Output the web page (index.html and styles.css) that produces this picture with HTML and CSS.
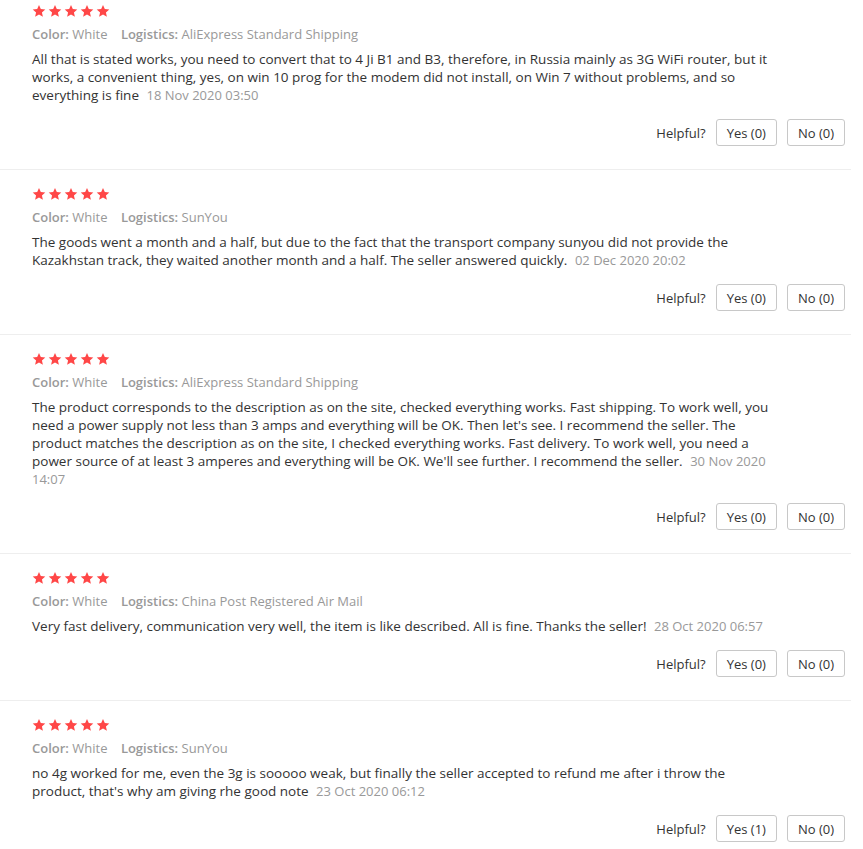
FILE: index.html
```html
<!DOCTYPE html>
<html lang="en">
  <head>
    <meta charset="UTF-8" />
    <meta name="viewport" content="width=device-width, initial-scale=1.0" />
    <title>Feedback</title>
    <link rel="stylesheet" href="styles.css">
  </head>
  <body>
    <div class="feedback-list">

      <div class="feedback-item">
        <div class="stars">
          <svg class="star" viewBox="0 0 24 24"><path d="M12 1.5l3.1 7.1 7.7.7-5.8 5.1 1.7 7.6L12 18l-6.7 4 1.7-7.6-5.8-5.1 7.7-.7z"/></svg>
          <svg class="star" viewBox="0 0 24 24"><path d="M12 1.5l3.1 7.1 7.7.7-5.8 5.1 1.7 7.6L12 18l-6.7 4 1.7-7.6-5.8-5.1 7.7-.7z"/></svg>
          <svg class="star" viewBox="0 0 24 24"><path d="M12 1.5l3.1 7.1 7.7.7-5.8 5.1 1.7 7.6L12 18l-6.7 4 1.7-7.6-5.8-5.1 7.7-.7z"/></svg>
          <svg class="star" viewBox="0 0 24 24"><path d="M12 1.5l3.1 7.1 7.7.7-5.8 5.1 1.7 7.6L12 18l-6.7 4 1.7-7.6-5.8-5.1 7.7-.7z"/></svg>
          <svg class="star" viewBox="0 0 24 24"><path d="M12 1.5l3.1 7.1 7.7.7-5.8 5.1 1.7 7.6L12 18l-6.7 4 1.7-7.6-5.8-5.1 7.7-.7z"/></svg>
        </div>
        <div class="meta">
          <span class="meta-field"><b>Color:</b> White</span>
          <span class="meta-field"><b>Logistics:</b> AliExpress Standard Shipping</span>
        </div>
        <div class="content">All that is stated works, you need to convert that to 4 Ji B1 and B3, therefore, in Russia mainly as 3G WiFi router, but it works, a convenient thing, yes, on win 10 prog for the modem did not install, on Win 7 without problems, and so everything is fine <span class="date">18 Nov 2020 03:50</span></div>
        <div class="helpful">
          <span>Helpful?</span>
          <button class="vote">Yes (0)</button>
          <button class="vote">No (0)</button>
        </div>
      </div>

      <div class="feedback-item">
        <div class="stars">
          <svg class="star" viewBox="0 0 24 24"><path d="M12 1.5l3.1 7.1 7.7.7-5.8 5.1 1.7 7.6L12 18l-6.7 4 1.7-7.6-5.8-5.1 7.7-.7z"/></svg>
          <svg class="star" viewBox="0 0 24 24"><path d="M12 1.5l3.1 7.1 7.7.7-5.8 5.1 1.7 7.6L12 18l-6.7 4 1.7-7.6-5.8-5.1 7.7-.7z"/></svg>
          <svg class="star" viewBox="0 0 24 24"><path d="M12 1.5l3.1 7.1 7.7.7-5.8 5.1 1.7 7.6L12 18l-6.7 4 1.7-7.6-5.8-5.1 7.7-.7z"/></svg>
          <svg class="star" viewBox="0 0 24 24"><path d="M12 1.5l3.1 7.1 7.7.7-5.8 5.1 1.7 7.6L12 18l-6.7 4 1.7-7.6-5.8-5.1 7.7-.7z"/></svg>
          <svg class="star" viewBox="0 0 24 24"><path d="M12 1.5l3.1 7.1 7.7.7-5.8 5.1 1.7 7.6L12 18l-6.7 4 1.7-7.6-5.8-5.1 7.7-.7z"/></svg>
        </div>
        <div class="meta">
          <span class="meta-field"><b>Color:</b> White</span>
          <span class="meta-field"><b>Logistics:</b> SunYou</span>
        </div>
        <div class="content">The goods went a month and a half, but due to the fact that the transport company sunyou did not provide the Kazakhstan track, they waited another month and a half. The seller answered quickly. <span class="date">02 Dec 2020 20:02</span></div>
        <div class="helpful">
          <span>Helpful?</span>
          <button class="vote">Yes (0)</button>
          <button class="vote">No (0)</button>
        </div>
      </div>

      <div class="feedback-item">
        <div class="stars">
          <svg class="star" viewBox="0 0 24 24"><path d="M12 1.5l3.1 7.1 7.7.7-5.8 5.1 1.7 7.6L12 18l-6.7 4 1.7-7.6-5.8-5.1 7.7-.7z"/></svg>
          <svg class="star" viewBox="0 0 24 24"><path d="M12 1.5l3.1 7.1 7.7.7-5.8 5.1 1.7 7.6L12 18l-6.7 4 1.7-7.6-5.8-5.1 7.7-.7z"/></svg>
          <svg class="star" viewBox="0 0 24 24"><path d="M12 1.5l3.1 7.1 7.7.7-5.8 5.1 1.7 7.6L12 18l-6.7 4 1.7-7.6-5.8-5.1 7.7-.7z"/></svg>
          <svg class="star" viewBox="0 0 24 24"><path d="M12 1.5l3.1 7.1 7.7.7-5.8 5.1 1.7 7.6L12 18l-6.7 4 1.7-7.6-5.8-5.1 7.7-.7z"/></svg>
          <svg class="star" viewBox="0 0 24 24"><path d="M12 1.5l3.1 7.1 7.7.7-5.8 5.1 1.7 7.6L12 18l-6.7 4 1.7-7.6-5.8-5.1 7.7-.7z"/></svg>
        </div>
        <div class="meta">
          <span class="meta-field"><b>Color:</b> White</span>
          <span class="meta-field"><b>Logistics:</b> AliExpress Standard Shipping</span>
        </div>
        <div class="content">The product corresponds to the description as on the site, checked everything works. Fast shipping. To work well, you need a power supply not less than 3 amps and everything will be OK. Then let's see. I recommend the seller. The product matches the description as on the site, I checked everything works. Fast delivery. To work well, you need a power source of at least 3 amperes and everything will be OK. We'll see further. I recommend the seller. <span class="date">30 Nov 2020 14:07</span></div>
        <div class="helpful">
          <span>Helpful?</span>
          <button class="vote">Yes (0)</button>
          <button class="vote">No (0)</button>
        </div>
      </div>

      <div class="feedback-item">
        <div class="stars">
          <svg class="star" viewBox="0 0 24 24"><path d="M12 1.5l3.1 7.1 7.7.7-5.8 5.1 1.7 7.6L12 18l-6.7 4 1.7-7.6-5.8-5.1 7.7-.7z"/></svg>
          <svg class="star" viewBox="0 0 24 24"><path d="M12 1.5l3.1 7.1 7.7.7-5.8 5.1 1.7 7.6L12 18l-6.7 4 1.7-7.6-5.8-5.1 7.7-.7z"/></svg>
          <svg class="star" viewBox="0 0 24 24"><path d="M12 1.5l3.1 7.1 7.7.7-5.8 5.1 1.7 7.6L12 18l-6.7 4 1.7-7.6-5.8-5.1 7.7-.7z"/></svg>
          <svg class="star" viewBox="0 0 24 24"><path d="M12 1.5l3.1 7.1 7.7.7-5.8 5.1 1.7 7.6L12 18l-6.7 4 1.7-7.6-5.8-5.1 7.7-.7z"/></svg>
          <svg class="star" viewBox="0 0 24 24"><path d="M12 1.5l3.1 7.1 7.7.7-5.8 5.1 1.7 7.6L12 18l-6.7 4 1.7-7.6-5.8-5.1 7.7-.7z"/></svg>
        </div>
        <div class="meta">
          <span class="meta-field"><b>Color:</b> White</span>
          <span class="meta-field"><b>Logistics:</b> China Post Registered Air Mail</span>
        </div>
        <div class="content">Very fast delivery, communication very well, the item is like described. All is fine. Thanks the seller! <span class="date">28 Oct 2020 06:57</span></div>
        <div class="helpful">
          <span>Helpful?</span>
          <button class="vote">Yes (0)</button>
          <button class="vote">No (0)</button>
        </div>
      </div>

      <div class="feedback-item">
        <div class="stars">
          <svg class="star" viewBox="0 0 24 24"><path d="M12 1.5l3.1 7.1 7.7.7-5.8 5.1 1.7 7.6L12 18l-6.7 4 1.7-7.6-5.8-5.1 7.7-.7z"/></svg>
          <svg class="star" viewBox="0 0 24 24"><path d="M12 1.5l3.1 7.1 7.7.7-5.8 5.1 1.7 7.6L12 18l-6.7 4 1.7-7.6-5.8-5.1 7.7-.7z"/></svg>
          <svg class="star" viewBox="0 0 24 24"><path d="M12 1.5l3.1 7.1 7.7.7-5.8 5.1 1.7 7.6L12 18l-6.7 4 1.7-7.6-5.8-5.1 7.7-.7z"/></svg>
          <svg class="star" viewBox="0 0 24 24"><path d="M12 1.5l3.1 7.1 7.7.7-5.8 5.1 1.7 7.6L12 18l-6.7 4 1.7-7.6-5.8-5.1 7.7-.7z"/></svg>
          <svg class="star" viewBox="0 0 24 24"><path d="M12 1.5l3.1 7.1 7.7.7-5.8 5.1 1.7 7.6L12 18l-6.7 4 1.7-7.6-5.8-5.1 7.7-.7z"/></svg>
        </div>
        <div class="meta">
          <span class="meta-field"><b>Color:</b> White</span>
          <span class="meta-field"><b>Logistics:</b> SunYou</span>
        </div>
        <div class="content">no 4g worked for me, even the 3g is sooooo weak, but finally the seller accepted to refund me after i throw the product, that's why am giving rhe good note <span class="date">23 Oct 2020 06:12</span></div>
        <div class="helpful">
          <span>Helpful?</span>
          <button class="vote">Yes (1)</button>
          <button class="vote">No (0)</button>
        </div>
      </div>

    </div>
  </body>
</html>
```

FILE: styles.css
```css
body {
  margin: 0;
  font-family: "Open Sans", Arial, sans-serif;
  font-size: 13px;
  color: #333;
  background-color: white;
}
.feedback-list {
  width: 851px;
  margin-top: -13px;
}
.feedback-item {
  padding: 16px 6px 23px 32px;
  border-bottom: 1px solid #eee;
}
.stars {
  display: flex;
  gap: 2px;
  height: 16px;
  align-items: center;
}
.star {
  width: 14px;
  height: 14px;
  fill: #ff4747;
}
.meta {
  margin-top: 6px;
  line-height: 18px;
  color: #999;
}
.meta-field {
  margin-right: 10px;
}
.meta-field b {
  font-weight: 600;
}
.content {
  margin-top: 7px;
  font-size: 13.5px;
  line-height: 18px;
  max-width: 739px;
}
.date {
  font-size: 13px;
  color: #999;
  margin-left: 4px;
}
.helpful {
  margin-top: 15px;
  display: flex;
  justify-content: flex-end;
  align-items: center;
  gap: 10px;
}
.vote {
  height: 27px;
  padding: 0 10px;
  font-family: inherit;
  font-size: 13px;
  color: #333;
  background-color: white;
  border: 1px solid #c8c8c8;
  border-radius: 3px;
  cursor: pointer;
}
```
